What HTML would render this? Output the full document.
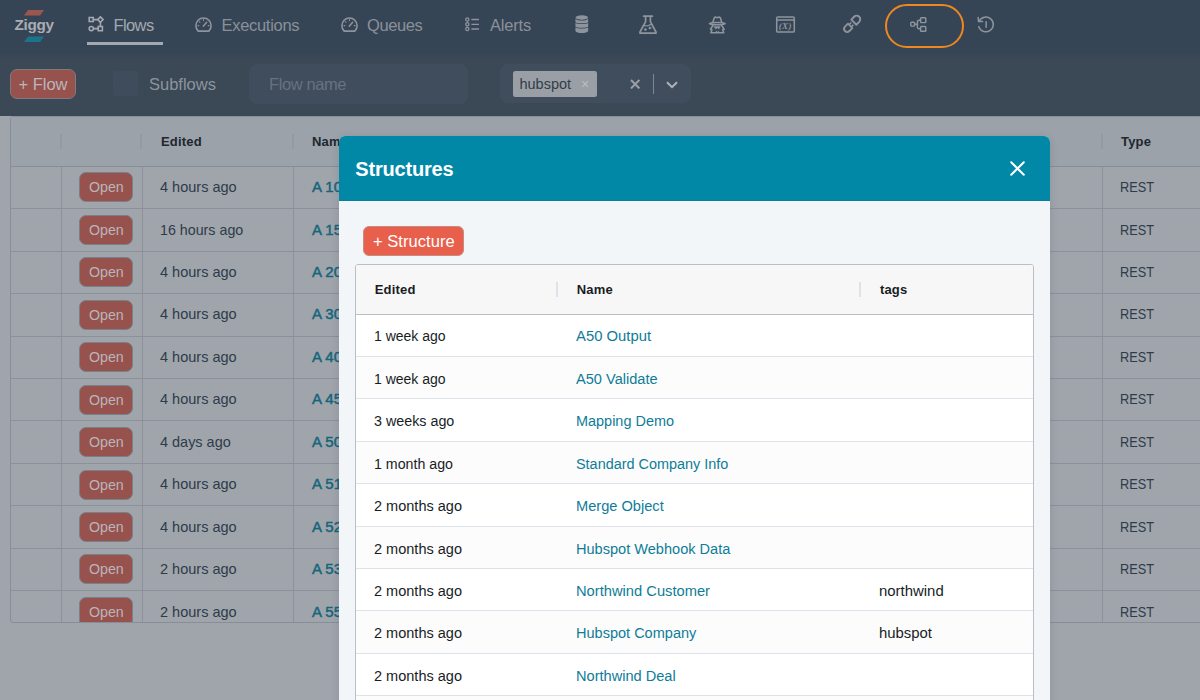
<!DOCTYPE html>
<html lang="en">
<head>
<meta charset="utf-8">
<title>Ziggy - Flows</title>
<style>
*{box-sizing:border-box;margin:0;padding:0}
html,body{width:1200px;height:700px;overflow:hidden}
body{font-family:"Liberation Sans",Arial,sans-serif;background:#a0a5ac;position:relative;color:#2e3a47}
.abs{position:absolute}
/* NAV */
#nav{position:absolute;left:0;top:0;width:1200px;height:54px;background:#364555;z-index:3}
#nav:after{content:"";position:absolute;left:0;top:54px;width:100%;height:6px;background:linear-gradient(rgba(54,69,85,.6),rgba(54,69,85,0))}
#nav .txt{position:absolute;top:14.6px;font-size:16.5px;line-height:20px;color:#8a909a;white-space:nowrap}
#nav svg{position:absolute;overflow:visible}
#underline{position:absolute;left:86.8px;top:42.3px;width:76.2px;height:2.3px;background:#a4a9b1}
#pill{position:absolute;left:885px;top:3.8px;width:79.3px;height:44.3px;border:2.2px solid #ef8820;border-radius:22.2px}
#logo{position:absolute;left:14.5px;top:17.3px;font-size:15.3px;font-weight:bold;color:#a9adb4;line-height:16px;letter-spacing:-.35px}
/* TOOLBAR */
#bar{position:absolute;left:0;top:52px;width:1200px;height:63.7px;background:#3b4855;z-index:2}
#addflow{position:absolute;left:10px;top:17px;width:66px;height:30px;border-radius:7px;background:#97524e;border:1px solid #7f7a80;color:#b9b6ba;font-size:16.5px;line-height:28px;text-align:center}
#cb{position:absolute;left:112.6px;top:19px;width:25.2px;height:25px;background:#3f4c5c;border-radius:2px}
#sub{position:absolute;left:149px;top:21.5px;font-size:16.5px;line-height:20px;color:#8e949d}
#fname{position:absolute;left:248.7px;top:11.8px;width:219.3px;height:40.2px;border-radius:8px;background:#404d5d;color:#67727f;font-size:16.5px;line-height:40px;padding-left:20.3px;letter-spacing:-.4px}
#tags{position:absolute;left:500.3px;top:12.4px;width:190.7px;height:38.6px;border-radius:8px;background:#404d5d}
#tag{position:absolute;left:12.7px;top:6.2px;width:83.6px;height:26.6px;border-radius:2.5px;background:#9a9fa6;color:#323d49;font-size:14.5px;line-height:27px;padding-left:6.5px}
#tag span{position:absolute;left:68px;top:0;color:#b9bdc3;font-size:14px}
/* BACK GRID */
#grid{position:absolute;left:10px;top:116px;width:1200px;height:507px;border:1px solid #878e98;border-radius:3px;background:#a0a5ac;overflow:hidden}
#grid .hd{position:absolute;left:0;top:0;width:100%;height:49.8px;background:#9ca2a9;border-bottom:1px solid #878e98}
#grid .hd b{position:absolute;top:17.2px;font-size:13px;line-height:16px;color:#20272e;letter-spacing:.2px}
#grid .hd i{position:absolute;top:17px;width:2px;height:14.5px;background:#939aa5}
#grid .row{position:absolute;left:0;width:100%;height:42.45px;border-bottom:1px solid #8a919b}
#grid .row span{position:absolute;top:12.3px;font-size:14.2px;line-height:16px;color:#2e3b49;white-space:nowrap;transform-origin:0 50%}
#grid .row a{position:absolute;left:300.6px;top:12.3px;font-size:14.2px;line-height:16px;color:#15657b;white-space:nowrap;-webkit-text-stroke:.45px #15657b;transform-origin:0 50%}
#grid .row em{position:absolute;left:68px;top:5.6px;width:54px;height:30.4px;height:30px;border-radius:7px;background:#97524e;border:1px solid #78808b;color:#b9b6ba;font-size:14.2px;line-height:28px;text-align:center;font-style:normal}
#grid .row em u{display:inline-block;text-decoration:none}
#grid .v{position:absolute;top:49.8px;width:1px;height:460px;background:#8b929c}
/* MODAL */
#modal{position:absolute;left:339.3px;top:136px;width:710.7px;height:600px;background:#f3f6f9;border-radius:6px 6px 0 0;z-index:5;overflow:hidden;box-shadow:0 2px 8px rgba(40,50,60,.15)}
#mh{position:absolute;left:0;top:0;width:100%;height:65px;border-bottom:1px solid #0b7d99;background:#0288a7;color:#fff;font-size:20px;font-weight:bold;line-height:24px;padding:21px 0 0 16px;letter-spacing:-.2px}
#addst{position:absolute;left:24px;top:90px;width:101px;height:30px;border-radius:6px;background:#e8604c;border:1px solid #c98a80;color:#fff;font-size:16.5px;line-height:28px;text-align:center;letter-spacing:.05px}
#mg{position:absolute;left:16px;top:128.3px;width:679px;height:500px;border:1px solid #babfc7;border-radius:3px;background:#fff;overflow:hidden}
#mg .hd{position:absolute;left:0;top:0;width:100%;height:49.7px;background:#f7f7f7;border-bottom:1px solid #babfc7;z-index:2}
#mg .hd b{position:absolute;top:17.2px;font-size:13px;line-height:16px;color:#181d1f;letter-spacing:.2px}
#mg .hd i{position:absolute;top:17px;width:2px;height:15px;background:#dde2eb}
#mg .row{position:absolute;left:0;width:100%;height:42.45px;border-bottom:1px solid #dde2eb;background:#fff}
#mg .row.o{background:#fcfcfc}
#mg .row span,#mg .row a{position:absolute;top:14.0px;font-size:14px;line-height:16px;color:#181d1f;white-space:nowrap;transform-origin:0 50%}
#mg .row a{left:219.9px;color:#0e7c98}
</style>
</head>
<body>

<div id="nav">
  <div id="logo">Ziggy</div>
  <svg style="left:24px;top:10px" width="20" height="32" viewBox="0 0 20 32">
    <polygon points="4,0 20,0 16,5.5 0,5.5" fill="#9a564f"/>
    <polygon points="4,26.5 20,26.5 16,32 0,32" fill="#1d7389"/>
  </svg>
  <div class="txt" style="left:113.5px;color:#a4a9b1;letter-spacing:-.6px">Flows</div>
  <div class="txt" style="left:221.5px;letter-spacing:-.3px">Executions</div>
  <div class="txt" style="left:367px;letter-spacing:-.4px">Queues</div>
  <div class="txt" style="left:490px;letter-spacing:-.2px">Alerts</div>

  <!-- flows icon -->
  <svg style="left:88px;top:16.3px" width="16" height="16" viewBox="0 0 16 16" fill="none" stroke="#a4a9b1" stroke-width="1.55">
    <rect x="1.2" y="1.5" width="4" height="4"/>
    <path d="M12.4 0.9L15.1 3.6L12.4 6.3L9.7 3.6Z"/>
    <circle cx="3.3" cy="12.6" r="2.1"/>
    <rect x="10.2" y="10.5" width="4.2" height="4.2"/>
    <path d="M5.2 3.6H9.7M12.4 6.3V10.5M5.4 12.6H10.2"/>
  </svg>
  <!-- gauge icons -->
  <svg style="left:195px;top:16.8px" width="17" height="15" viewBox="0 0 17 15" fill="none" stroke="#8e949d" stroke-width="1.6" stroke-linecap="round">
    <path d="M3.2 14.1H13.8A7.6 7.6 0 1 0 3.2 14.1Z" stroke-linejoin="round"/>
    <path d="M8.3 9.2L11.6 5.2" stroke-width="1.5"/>
    <path d="M8.5 2.6V3.6M4.4 4.6L5 5.2M3 8.6H3.8M13.2 8.6H14" stroke-width="1.1"/>
  </svg>
  <svg style="left:340.7px;top:16.8px" width="17" height="15" viewBox="0 0 17 15" fill="none" stroke="#8e949d" stroke-width="1.6" stroke-linecap="round">
    <path d="M3.2 14.1H13.8A7.6 7.6 0 1 0 3.2 14.1Z" stroke-linejoin="round"/>
    <path d="M8.3 9.2L11.6 5.2" stroke-width="1.5"/>
    <path d="M8.5 2.6V3.6M4.4 4.6L5 5.2M3 8.6H3.8M13.2 8.6H14" stroke-width="1.1"/>
  </svg>
  <!-- alerts list icon -->
  <svg style="left:465px;top:17px" width="15" height="15" viewBox="0 0 15 15" fill="none" stroke="#8e949d" stroke-width="1.3">
    <circle cx="2.3" cy="2.5" r="1.6"/><circle cx="2.3" cy="7.3" r="1.6"/><circle cx="2.3" cy="12" r="1.6"/>
    <path d="M6.4 2.5H14M6.4 7.3H14M6.4 12H14"/>
  </svg>
  <!-- database icon -->
  <svg style="left:574.5px;top:15px" width="14" height="19" viewBox="0 0 14 19" fill="#8e949d" stroke="none">
    <ellipse cx="6.8" cy="2.5" rx="6.35" ry="2.15"/>
    <path d="M0.45 3.7C1.6 5.1 4 5.5 6.8 5.5S12 5.1 13.15 3.7V7.2C12 8 10 8.3 6.8 8.3S1.6 8 0.45 7.2Z"/>
    <path d="M0.45 8C1.6 8.8 4 9.1 6.8 9.1S12 8.8 13.15 8V11.7C12 12.5 10 12.8 6.8 12.8S1.6 12.5 0.45 11.7Z"/>
    <path d="M0.45 12.5C1.6 13.3 4 13.6 6.8 13.6S12 13.3 13.15 12.5V16C12.4 17.4 10 18.1 6.8 18.1S1.2 17.4 0.45 16Z"/>
  </svg>
  <!-- flask icon -->
  <svg style="left:639px;top:14.5px" width="18" height="19" viewBox="0 0 18 19" fill="none" stroke="#8e949d" stroke-width="1.7" stroke-linejoin="round" stroke-linecap="round">
    <path d="M4.6 1.2H13.4M6.6 1.4V6.6L1 17V18.2H17V17L11.4 6.6V1.4"/>
    <path d="M4.2 11.2C6 9.6 7.6 11.6 9.4 10.6S11.8 9.2 12.6 9.4" stroke-width="1.1"/>
    <circle cx="6.4" cy="14.6" r="1" fill="#8e949d" stroke-width=".6"/>
    <circle cx="10.9" cy="13" r="1.1" fill="#8e949d" stroke-width=".6"/>
  </svg>
  <!-- spy icon -->
  <svg style="left:707.5px;top:15.5px" width="19" height="18" viewBox="0 0 19 18" fill="none" stroke="#8e949d" stroke-width="1.6" stroke-linejoin="round" stroke-linecap="round">
    <path d="M4.9 6.2L6.2 2.1C6.5 1.2 7.3 1 7.9 1.3C8.9 1.8 9.7 1.8 10.7 1.3C11.3 1 12.1 1.2 12.4 2.1L13.7 6.2"/>
    <path d="M1.5 7.6C3.3 6.2 15.3 6.2 17.1 7.6C15.3 9.2 3.3 9.2 1.5 7.6Z"/>
    <path d="M5 9.4L2.5 13.2L3.9 13.8L2.9 16.8H15.7L14.7 13.8L16.1 13.2L13.6 9.4"/>
    <path d="M6.4 10.6H12.2L11.2 12.6H10L9.3 11.6L8.6 12.6H7.4Z" fill="#8e949d" stroke-width=".6"/>
    <path d="M7.9 15L9.3 16.5L10.7 15" stroke-width="1"/>
  </svg>
  <!-- window (x) icon -->
  <svg style="left:776px;top:15.5px" width="19" height="17" viewBox="0 0 19 17" fill="none" stroke="#8e949d" stroke-width="1.5">
    <rect x="0.7" y="0.9" width="17.6" height="15.2" rx="1.2"/>
    <path d="M0.7 4H18.3"/>
    <text x="9.3" y="13" text-anchor="middle" font-family="Liberation Serif,serif" font-style="italic" font-size="9" fill="#8e949d" stroke="none" font-weight="bold" letter-spacing=".4">(X)</text>
  </svg>
  <!-- link icon -->
  <svg style="left:840.1px;top:12px" width="24" height="24" viewBox="-12 -12 24 24" fill="none" stroke="#8e949d" stroke-width="1.9" stroke-linejoin="round" stroke-linecap="butt">
    <g transform="rotate(-45)">
      <path d="M2.6 -3.6H6.6A3.6 3.6 0 0 1 6.6 3.6H2.6Z"/>
      <path d="M-2.6 -3.1H-6.8A3.1 3.1 0 0 0 -6.8 3.1H-2.6Z" stroke-width="1.8"/>
      <path d="M-2.6 -1.5H0.5M-2.6 1.5H0.5" stroke-width="1.5"/>
    </g>
  </svg>
  <!-- structure icon -->
  <svg style="left:909.5px;top:17px" width="17" height="15" viewBox="0 0 17 15" fill="none" stroke="#8e949d" stroke-width="1.45">
    <rect x="0.8" y="5.3" width="3.8" height="3.8" rx=".8"/>
    <rect x="10.6" y="0.8" width="5.2" height="4.8" rx=".8"/>
    <rect x="10.6" y="9.4" width="5.2" height="4.8" rx=".8"/>
    <path d="M4.6 7.2H7.4M10.6 3.2H9.2A1.8 1.8 0 0 0 7.4 5V9.6A1.8 1.8 0 0 0 9.2 11.8H10.6"/>
  </svg>
  <!-- history icon -->
  <svg style="left:976.5px;top:16px" width="18" height="17" viewBox="0 0 18 17" fill="none" stroke="#8e949d" stroke-width="1.5" stroke-linecap="round" stroke-linejoin="round">
    <path d="M2.2 5.2A7.4 7.4 0 1 1 1.8 10.6"/>
    <path d="M1.2 1.6L1.6 5.6L5.6 5.4"/>
    <path d="M9.1 5.7V11.3" stroke-width="1.5"/>
  </svg>
  <div id="underline"></div>
  <div id="pill"></div>
</div>

<div id="bar">
  <div id="addflow">+ Flow</div>
  <div id="cb"></div>
  <div id="sub">Subflows</div>
  <div id="fname">Flow name</div>
  <div id="tags"><div id="tag">hubspot<span>×</span></div>
    <svg class="abs" style="left:129.4px;top:14.6px" width="10.4" height="10.4" viewBox="0 0 10.4 10.4"><path d="M1 1L9.4 9.4M9.4 1L1 9.4" stroke="#9a9fa6" stroke-width="2.1" fill="none"/></svg>
    <div class="abs" style="left:153px;top:9.6px;width:1px;height:20px;background:#7f8790"></div>
    <svg class="abs" style="left:166px;top:16.5px" width="12" height="8" viewBox="0 0 12 8"><path d="M1 1.2L6 6.2L11 1.2" stroke="#b0b4ba" stroke-width="2" fill="none"/></svg>
  </div>
</div>

<div id="grid">
  <div class="hd">
    <i style="left:48.6px"></i><i style="left:129.4px"></i><i style="left:280.8px"></i><i style="left:1089.6px"></i>
    <b style="left:150px">Edited</b><b style="left:301px">Name</b><b style="left:1110px">Type</b>
  </div>
  <div class="v" style="left:50px"></div><div class="v" style="left:131px"></div><div class="v" style="left:281.8px"></div><div class="v" style="left:1090.7px"></div>
  <div class="row" style="top:49.80px"><em><u style="transform:scaleX(1.0009)">Open</u></em><span style="left:149.4px;transform:scaleX(1.0235)">4 hours ago</span><a style="transform:scaleX(1.0561)">A 10</a><span style="left:1108.6px;transform:scaleX(0.8984)">REST</span></div>
  <div class="row" style="top:92.25px"><em><u style="transform:scaleX(1.0009)">Open</u></em><span style="left:149.4px;transform:scaleX(1.0051)">16 hours ago</span><a style="transform:scaleX(1.0561)">A 15</a><span style="left:1108.6px;transform:scaleX(0.8984)">REST</span></div>
  <div class="row" style="top:134.70px"><em><u style="transform:scaleX(1.0009)">Open</u></em><span style="left:149.4px;transform:scaleX(1.0235)">4 hours ago</span><a style="transform:scaleX(1.0561)">A 20</a><span style="left:1108.6px;transform:scaleX(0.8984)">REST</span></div>
  <div class="row" style="top:177.15px"><em><u style="transform:scaleX(1.0009)">Open</u></em><span style="left:149.4px;transform:scaleX(1.0235)">4 hours ago</span><a style="transform:scaleX(1.0561)">A 30</a><span style="left:1108.6px;transform:scaleX(0.8984)">REST</span></div>
  <div class="row" style="top:219.60px"><em><u style="transform:scaleX(1.0009)">Open</u></em><span style="left:149.4px;transform:scaleX(1.0235)">4 hours ago</span><a style="transform:scaleX(1.0561)">A 40</a><span style="left:1108.6px;transform:scaleX(0.8984)">REST</span></div>
  <div class="row" style="top:262.05px"><em><u style="transform:scaleX(1.0009)">Open</u></em><span style="left:149.4px;transform:scaleX(1.0235)">4 hours ago</span><a style="transform:scaleX(1.0561)">A 45</a><span style="left:1108.6px;transform:scaleX(0.8984)">REST</span></div>
  <div class="row" style="top:304.50px"><em><u style="transform:scaleX(1.0009)">Open</u></em><span style="left:149.4px;transform:scaleX(1.0191)">4 days ago</span><a style="transform:scaleX(1.0561)">A 50</a><span style="left:1108.6px;transform:scaleX(0.8984)">REST</span></div>
  <div class="row" style="top:346.95px"><em><u style="transform:scaleX(1.0009)">Open</u></em><span style="left:149.4px;transform:scaleX(1.0235)">4 hours ago</span><a style="transform:scaleX(1.0561)">A 51</a><span style="left:1108.6px;transform:scaleX(0.8984)">REST</span></div>
  <div class="row" style="top:389.40px"><em><u style="transform:scaleX(1.0009)">Open</u></em><span style="left:149.4px;transform:scaleX(1.0235)">4 hours ago</span><a style="transform:scaleX(1.0561)">A 52</a><span style="left:1108.6px;transform:scaleX(0.8984)">REST</span></div>
  <div class="row" style="top:431.85px"><em><u style="transform:scaleX(1.0009)">Open</u></em><span style="left:149.4px;transform:scaleX(1.0235)">2 hours ago</span><a style="transform:scaleX(1.0561)">A 53</a><span style="left:1108.6px;transform:scaleX(0.8984)">REST</span></div>
  <div class="row" style="top:474.30px"><em><u style="transform:scaleX(1.0009)">Open</u></em><span style="left:149.4px;transform:scaleX(1.0235)">2 hours ago</span><a style="transform:scaleX(1.0561)">A 55</a><span style="left:1108.6px;transform:scaleX(0.8984)">REST</span></div>
</div>

<div id="modal">
  <div id="mh">Structures</div>
  <svg class="abs" style="left:670.6px;top:25px" width="15" height="15" viewBox="0 0 15 15"><path d="M1.2 1.2L13.8 13.8M13.8 1.2L1.2 13.8" stroke="#fff" stroke-width="2" stroke-linecap="round" fill="none"/></svg>
  <div id="addst">+ Structure</div>
  <div id="mg">
    <div class="hd">
      <i style="left:200px"></i><i style="left:503px"></i>
      <b style="left:18.4px">Edited</b><b style="left:220.4px">Name</b><b style="left:523.6px">tags</b>
    </div>
    <div class="row" style="top:49.00px"><span style="left:17.7px;transform:scaleX(0.9999)">1 week ago</span><a style="transform:scaleX(1.0589)">A50 Output</a></div>
    <div class="row o" style="top:91.45px"><span style="left:17.7px;transform:scaleX(0.9999)">1 week ago</span><a style="transform:scaleX(1.0414)">A50 Validate</a></div>
    <div class="row" style="top:133.90px"><span style="left:17.7px;transform:scaleX(1.0215)">3 weeks ago</span><a style="transform:scaleX(1.0323)">Mapping Demo</a></div>
    <div class="row o" style="top:176.35px"><span style="left:17.7px;transform:scaleX(1.0149)">1 month ago</span><a style="transform:scaleX(1.0299)">Standard Company Info</a></div>
    <div class="row" style="top:218.80px"><span style="left:17.7px;transform:scaleX(1.0372)">2 months ago</span><a style="transform:scaleX(1.0435)">Merge Object</a></div>
    <div class="row o" style="top:261.25px"><span style="left:17.7px;transform:scaleX(1.0372)">2 months ago</span><a style="transform:scaleX(1.0398)">Hubspot Webhook Data</a></div>
    <div class="row" style="top:303.70px"><span style="left:17.7px;transform:scaleX(1.0372)">2 months ago</span><a style="transform:scaleX(1.0501)">Northwind Customer</a><span style="left:523px;transform:scaleX(1.0658)">northwind</span></div>
    <div class="row o" style="top:346.15px"><span style="left:17.7px;transform:scaleX(1.0372)">2 months ago</span><a style="transform:scaleX(1.0375)">Hubspot Company</a><span style="left:523px;transform:scaleX(1.0637)">hubspot</span></div>
    <div class="row" style="top:388.60px"><span style="left:17.7px;transform:scaleX(1.0372)">2 months ago</span><a style="transform:scaleX(1.0416)">Northwind Deal</a></div>
    <div class="row o" style="top:431.05px"><span style="left:17.7px;transform:scaleX(1.0372)">2 months ago</span><a style="transform:scaleX(1.0256)">Hubspot Deal</a></div>
  </div>
</div>

</body>
</html>
